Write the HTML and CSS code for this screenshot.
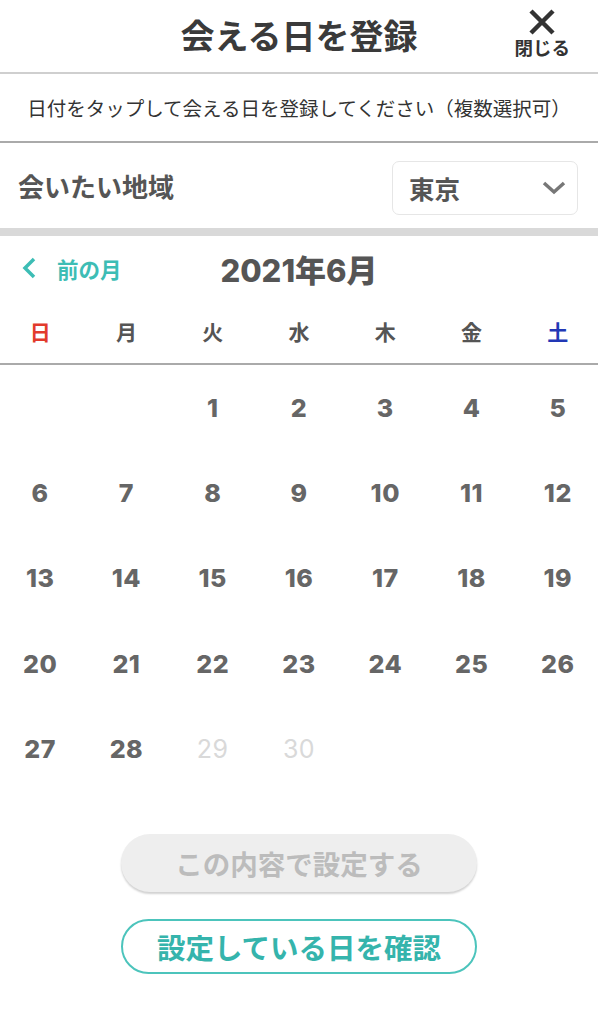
FILE: index.html
```html
<!DOCTYPE html>
<html lang="ja">

<head>
    <meta charset="UTF-8">
    <meta name="viewport" content="width=device-width, initial-scale=1.0">
    <title>会える日を登録</title>
    <link rel="stylesheet" href="styles.css">
</head>

<body>
    <header class="header">
        <span></span>
        <h1 class="title">会える日を登録</h1>
        <button type="button" class="closebtn">
            <svg width="28" height="28" viewBox="0 0 28 28">
                <path d="M3 3 L25 25 M25 3 L3 25" stroke="#333" stroke-width="4.5" stroke-linecap="butt" fill="none" />
            </svg>
            <span>閉じる</span>
        </button>
    </header>

    <p class="lead">日付をタップして会える日を登録してください（複数選択可）</p>

    <div class="area">
        <span class="area-label">会いたい地域</span>
        <div class="select">
            <span>東京</span>
            <svg width="24" height="16" viewBox="0 0 24 16">
                <path d="M2 3 L12 12 L22 3" stroke="#777" stroke-width="3.5" fill="none" />
            </svg>
        </div>
    </div>

    <div class="band"></div>

    <div class="monthnav">
        <a class="prev">
            <svg width="16" height="22" viewBox="0 0 16 22">
                <path d="M13 2 L4 11 L13 20" stroke="#3dbdb5" stroke-width="3.5" fill="none" />
            </svg>
            <span>前の月</span>
        </a>
        <h2 class="month">2021年6月</h2>
        <span></span>
    </div>

    <div class="calendar">
        <div class="week">
            <span class="sun">日</span>
            <span>月</span>
            <span>火</span>
            <span>水</span>
            <span>木</span>
            <span>金</span>
            <span class="sat">土</span>
        </div>
        <div class="days" id="days"></div>
    </div>

    <div class="actions">
        <button type="button" class="savebtn" disabled>この内容で設定する</button>
        <button type="button" class="checkbtn">設定している日を確認</button>
    </div>

    <script>
        const days = document.getElementById("days");
        const offset = 2;
        const total = 30;
        let html = "";
        for (let i = 0; i < offset; i++) {
            html += '<span class="day"></span>';
        }
        for (let d = 1; d <= total; d++) {
            let cls = d >= 29 ? "day off" : "day";
            html += '<span class="' + cls + '">' + d + '</span>';
        }
        days.innerHTML = html;
    </script>
</body>

</html>
```

FILE: styles.css
```css
* {
    box-sizing: border-box;
}

body {
    margin: 0;
    width: 598px;
    font-family: "Noto Sans CJK JP", "Noto Sans", sans-serif;
    color: #333;
    background: #fff;
    overflow-x: hidden;
}

button {
    font-family: inherit;
    cursor: pointer;
}

.header {
    display: grid;
    grid-template-columns: 1fr auto 1fr;
    align-items: center;
    height: 74px;
    border-bottom: 2px solid #cfcfcf;
}

.title {
    margin: 0;
    font-size: 34px;
    font-weight: 700;
    color: #3a3a3a;
    line-height: 1;
    padding-bottom: 2px;
}

.closebtn {
    justify-self: end;
    margin-right: 28px;
    padding: 0;
    border: none;
    background: none;
    display: flex;
    flex-direction: column;
    align-items: center;
    gap: 2px;
    margin-top: -8px;
}

.closebtn span {
    font-size: 18.5px;
    font-weight: 700;
    color: #333;
    line-height: 1;
}

.lead {
    margin: 0;
    height: 69px;
    display: flex;
    align-items: center;
    justify-content: center;
    font-size: 19.5px;
    color: #333;
    border-bottom: 2px solid #aaa;
}

.area {
    height: 85px;
    display: flex;
    align-items: center;
    justify-content: space-between;
    padding: 0 20px 0 18px;
}

.area-label {
    font-size: 26px;
    font-weight: 700;
    color: #555;
}

.select {
    width: 186px;
    height: 54px;
    border: 1px solid #e6e6e6;
    border-radius: 7px;
    display: flex;
    align-items: center;
    justify-content: space-between;
    padding: 0 11px 0 16px;
    font-size: 25.5px;
    font-weight: 700;
    color: #555;
    margin-top: 4px;
}

.band {
    height: 8px;
    background: #d9d9d9;
}

.monthnav {
    display: grid;
    grid-template-columns: 1fr auto 1fr;
    align-items: center;
    height: 64px;
}

.prev {
    display: flex;
    align-items: center;
    gap: 20px;
    padding-left: 21px;
    color: #3dbdb5;
    font-size: 21.5px;
    font-weight: 700;
}

.month {
    margin: 0;
    font-family: "Inter", "Noto Sans CJK JP", sans-serif;
    font-size: 31px;
    font-weight: 800;
    color: #555;
}

.calendar {
    width: 604px;
    margin-left: -3px;
}

.week {
    display: grid;
    grid-template-columns: repeat(7, 1fr);
    height: 65px;
    align-items: center;
    text-align: center;
    font-size: 21px;
    font-weight: 700;
    color: #555;
    border-bottom: 2px solid #aaa;
    padding-bottom: 2px;
}

.week .sun {
    color: #e23a2c;
}

.week .sat {
    color: #2238b5;
}

.days {
    display: grid;
    grid-template-columns: repeat(7, 1fr);
    grid-auto-rows: 85.3px;
    align-items: center;
    text-align: center;
}

.day {
    font-family: "Inter", "Noto Sans CJK JP", sans-serif;
    font-size: 25px;
    font-weight: 800;
    color: #666;
    letter-spacing: 0.5px;
}

.day.off {
    color: #d9d9d9;
    font-weight: 400;
}

.actions {
    display: flex;
    flex-direction: column;
    align-items: center;
    gap: 27px;
    margin-top: 43px;
}

.savebtn,
.checkbtn {
    width: 356px;
    border-radius: 30px;
    font-weight: 700;
    padding: 0;
}

.savebtn {
    height: 58px;
    border: none;
    background: #eeeeee;
    color: #bcbcbc;
    font-size: 27.5px;
    box-shadow: 0 2px 2px rgba(0, 0, 0, 0.18);
}

.checkbtn {
    height: 55px;
    border: 2px solid #4cc4bc;
    background: #fff;
    color: #35b4ac;
    font-size: 28.5px;
}
```
